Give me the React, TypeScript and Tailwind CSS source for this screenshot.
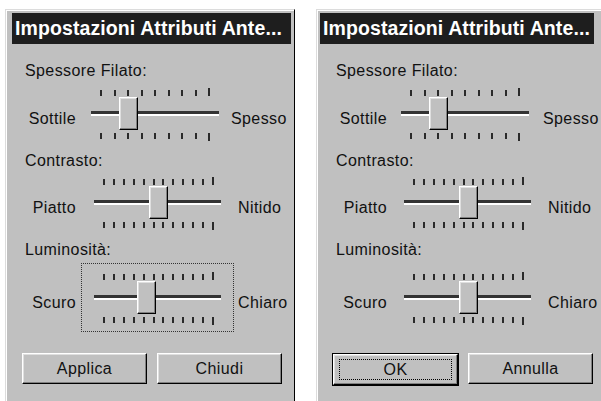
import React from 'react'

type Row = {
  heading: string
  left: string
  right: string
  trackX: number
  trackW: number
  thumbX: number
  ticks: number
  tickX: number
  tickW: number
  rightX: number
  gap: number
  focus?: boolean
}

type Btn = { label: string; x: number; def?: boolean }

type PanelProps = {
  x: number
  titleX: number
  titleW: number
  rows: Row[]
  buttons: Btn[]
  rightEdge?: boolean
}

const btnBase =
  'flex h-[31px] w-[125px] items-center justify-center bg-[#c0c0c0] text-[16px] tracking-[0.4px] text-[#111]'

function Ticks({ n, x, w, tall }: { n: number; x: number; w: number; tall: 'top' | 'bottom' }) {
  return (
    <div
      className={`flex justify-between ${tall === 'top' ? 'items-end' : 'items-start'}`}
      style={{ marginLeft: x, width: w }}
    >
      {Array.from({ length: n }).map((_, i) => (
        <div
          key={i}
          className={`w-[2px] bg-[#2a2a2a] ${i === n - 1 ? 'h-[8px]' : 'h-[6px]'}`}
        />
      ))}
    </div>
  )
}

function Slider({ r }: { r: Row }) {
  return (
    <div className="flex flex-col" style={{ width: r.trackW }}>
      <div className="h-[7px]">
        <Ticks n={r.ticks} x={r.tickX} w={r.tickW} tall="top" />
      </div>
      <div className="relative mt-[2px] h-[33px]">
        <div className="absolute left-0 right-0 top-[14px] h-[5px] border-t-[3px] border-b-2 border-t-[#333] border-b-white" />
        <div
          className="absolute top-0 h-[33px] w-[19px] border border-t-white border-l-white border-r-black border-b-black bg-[#c0c0c0] shadow-[inset_-1px_-1px_0_#808080,inset_1px_1px_0_#dfdfdf]"
          style={{ left: r.thumbX }}
        />
      </div>
      <div className="mt-[3px] h-[8px]">
        <Ticks n={r.ticks} x={r.tickX} w={r.tickW} tall="bottom" />
      </div>
    </div>
  )
}

function SliderRow({ r }: { r: Row }) {
  const boxX = r.trackX - 13
  return (
    <div className="flex items-start">
      <div className="mt-[22px] w-[70px] shrink-0 text-right">{r.left}</div>
      <div
        className={`mt-[-9px] shrink-0 border px-[12px] pt-[8px] pb-[6px] ${
          r.focus ? 'border-dotted border-[#333]' : 'border-transparent'
        }`}
        style={{ marginLeft: boxX - 70 }}
      >
        <Slider r={r} />
      </div>
      <div className="mt-[22px] shrink-0" style={{ marginLeft: r.rightX - (r.trackX + r.trackW + 13) }}>
        {r.right}
      </div>
    </div>
  )
}

function Panel({ x, titleX, titleW, rows, buttons, rightEdge }: PanelProps) {
  return (
    <div
      className={`relative mt-[9px] h-[392px] w-[290px] shrink-0 border-l border-t border-l-[#dcdcdc] border-t-[#dcdcdc] bg-[#c0c0c0] shadow-[inset_1px_1px_0_#ffffff] ${
        rightEdge ? 'border-r border-r-black' : ''
      }`}
      style={{ marginLeft: x }}
    >
      <div
        className="mt-[3px] flex h-[31px] items-center bg-[#1e1e1e] pl-[3px] text-[19.5px] font-bold tracking-[0.1px] text-white"
        style={{ marginLeft: titleX - 1, width: titleW }}
      >
        <span className="whitespace-nowrap">Impostazioni Attributi Ante...</span>
      </div>
      <div className="text-[16px] leading-[18px] tracking-[0.4px] text-[#111]">
        {rows.map((r, i) => (
          <div key={i} className={i === 0 ? 'mt-[18px]' : 'mt-[4px]'}>
            <div className="pl-[19px]">{r.heading}</div>
            <div style={{ marginTop: r.gap }}>
              <SliderRow r={r} />
            </div>
          </div>
        ))}
      </div>
      <div className="mt-[21px] flex">
        {buttons.map((b, i) => (
          <div key={i} style={{ marginLeft: i === 0 ? b.x - 1 : b.x - buttons[0].x - 125 }}>
            {b.def ? (
              <div className="border border-black">
                <div
                  className={`${btnBase} h-[29px] w-[123px] border border-t-white border-l-white border-r-black border-b-black shadow-[inset_-1px_-1px_0_#808080,inset_1px_1px_0_#dfdfdf]`}
                >
                  <div className="flex h-[21px] w-[113px] items-center justify-center border border-dotted border-black">
                    {b.label}
                  </div>
                </div>
              </div>
            ) : (
              <div
                className={`${btnBase} border border-t-white border-l-white border-r-black border-b-black shadow-[inset_-1px_-1px_0_#808080,inset_1px_1px_0_#dfdfdf]`}
              >
                {b.label}
              </div>
            )}
          </div>
        ))}
      </div>
    </div>
  )
}

const leftRows: Row[] = [
  { heading: 'Spessore Filato:', left: 'Sottile', right: 'Spesso', trackX: 85, trackW: 128, thumbX: 28, ticks: 9, tickX: 9, tickW: 110, rightX: 225, gap: 8 },
  { heading: 'Contrasto:', left: 'Piatto', right: 'Nitido', trackX: 88, trackW: 127, thumbX: 55, ticks: 12, tickX: 9, tickW: 111, rightX: 232, gap: 7 },
  { heading: 'Luminosità:', left: 'Scuro', right: 'Chiaro', trackX: 88, trackW: 127, thumbX: 43, ticks: 12, tickX: 9, tickW: 111, rightX: 232, gap: 13, focus: true },
]

const rightRows: Row[] = [
  { heading: 'Spessore Filato:', left: 'Sottile', right: 'Spesso', trackX: 84, trackW: 128, thumbX: 28, ticks: 9, tickX: 9, tickW: 110, rightX: 226, gap: 8 },
  { heading: 'Contrasto:', left: 'Piatto', right: 'Nitido', trackX: 87, trackW: 127, thumbX: 55, ticks: 12, tickX: 9, tickW: 111, rightX: 231, gap: 7 },
  { heading: 'Luminosità:', left: 'Scuro', right: 'Chiaro', trackX: 87, trackW: 127, thumbX: 55, ticks: 12, tickX: 9, tickW: 111, rightX: 231, gap: 13 },
]

export default function App() {
  return (
    <div className="flex h-[401px] w-[601px] overflow-hidden bg-white font-['Liberation_Sans',Arial,sans-serif]">
      <Panel
        x={5}
        titleX={7}
        titleW={279}
        rows={leftRows}
        buttons={[
          { label: 'Applica', x: 17 },
          { label: 'Chiudi', x: 152 },
        ]}
        rightEdge
      />
      <Panel
        x={21}
        titleX={4}
        titleW={274}
        rows={rightRows}
        buttons={[
          { label: 'OK', x: 16, def: true },
          { label: 'Annulla', x: 150 },
        ]}
      />
    </div>
  )
}
